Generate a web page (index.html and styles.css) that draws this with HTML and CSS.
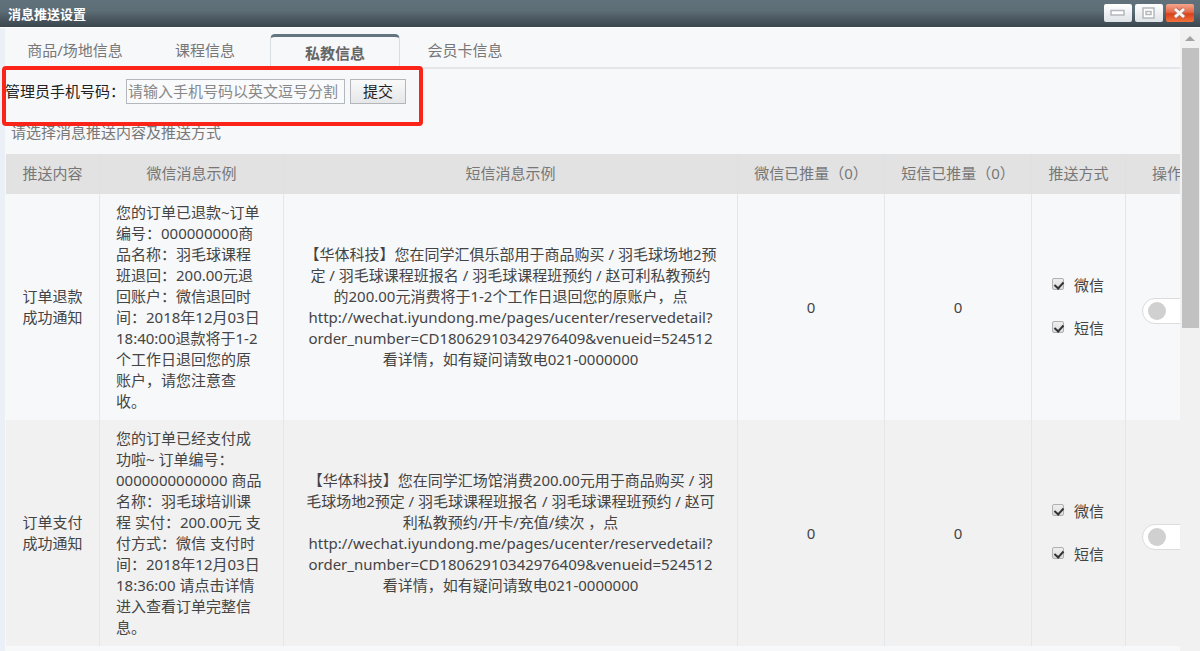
FILE: index.html
```html
<!DOCTYPE html>
<html lang="zh-CN">
<head>
<meta charset="utf-8">
<title>消息推送设置</title>
<link rel="stylesheet" href="styles.css">
</head>
<body>
<div class="window">
  <header class="titlebar">
    <h1 class="title">消息推送设置</h1>
    <div class="controls">
      <button class="ctl" type="button" aria-label="最小化">
        <svg width="28" height="18" viewBox="0 0 28 18"><rect x="7" y="6.500" width="13" height="4.500" fill="#fff" stroke="#b4b8bc" stroke-width="1.500"/></svg>
      </button>
      <button class="ctl" type="button" aria-label="最大化">
        <svg width="28" height="18" viewBox="0 0 28 18"><rect x="8" y="4" width="11" height="10" fill="#fff" stroke="#b4b8bc" stroke-width="1.500"/><rect x="11" y="7.500" width="5" height="3" fill="none" stroke="#b4b8bc" stroke-width="1.500"/></svg>
      </button>
      <button class="ctl ctl-close" type="button" aria-label="关闭">
        <svg width="28" height="18" viewBox="0 0 28 18"><path d="M9 5l9 8M18 5l-9 8" stroke="#b0705f" stroke-width="4.500"/><path d="M9 5l9 8M18 5l-9 8" stroke="#f6f3f2" stroke-width="3"/></svg>
      </button>
    </div>
  </header>
  <div class="body">
    <main class="pane">
      <nav class="tabs">
        <button class="tab" type="button">商品/场地信息</button>
        <button class="tab" type="button">课程信息</button>
        <button class="tab active" type="button">私教信息</button>
        <button class="tab" type="button">会员卡信息</button>
      </nav>
      <form class="phone-form">
        <label for="phone">管理员手机号码：</label>
        <input class="phone" id="phone" type="text" placeholder="请输入手机号码以英文逗号分割">
        <button class="submit" type="button">提交</button>
        <span class="highlight"></span>
      </form>
      <p class="hint">请选择消息推送内容及推送方式</p>
      <table class="grid">
        <colgroup><col class="c-name"><col class="c-wechat"><col class="c-sms"><col class="c-count"><col class="c-count"><col class="c-way"><col class="c-op"></colgroup>
        <thead>
          <tr><th>推送内容</th><th>微信消息示例</th><th>短信消息示例</th><th>微信已推量（0）</th><th>短信已推量（0）</th><th>推送方式</th><th class="op-head">操作</th></tr>
        </thead>
        <tbody>
          <tr>
            <td>订单退款<br>成功通知</td>
            <td class="wechat">您的订单已退款~订单<br>编号：000000000商<br>品名称：羽毛球课程<br>班退回：200.00元退<br>回账户：微信退回时<br>间：2018年12月03日<br>18:40:00退款将于1-2<br>个工作日退回您的原<br>账户，请您注意查<br>收。</td>
            <td>【华体科技】您在同学汇俱乐部用于商品购买 / 羽毛球场地2预<br>定 / 羽毛球课程班报名 / 羽毛球课程班预约 / 赵可利私教预约<br>的200.00元消费将于1-2个工作日退回您的原账户，点<br>http://wechat.iyundong.me/pages/ucenter/reservedetail?<br>order_number=CD18062910342976409&amp;venueid=524512<br>看详情，如有疑问请致电021-0000000</td>
            <td>0</td>
            <td>0</td>
            <td><div class="ways">
              <label class="way"><input class="check" type="checkbox" checked>微信</label>
              <label class="way"><input class="check" type="checkbox" checked>短信</label>
            </div></td>
            <td class="op"><input class="switch" type="checkbox" aria-label="启用订单退款成功通知"></td>
          </tr>
          <tr>
            <td>订单支付<br>成功通知</td>
            <td class="wechat">您的订单已经支付成<br>功啦~ 订单编号：<br>0000000000000 商品<br>名称：羽毛球培训课<br>程 实付：200.00元 支<br>付方式：微信 支付时<br>间：2018年12月03日<br>18:36:00 请点击详情<br>进入查看订单完整信<br>息。</td>
            <td>【华体科技】您在同学汇场馆消费200.00元用于商品购买 / 羽<br>毛球场地2预定 / 羽毛球课程班报名 / 羽毛球课程班预约 / 赵可<br>利私教预约/开卡/充值/续次 ，点<br>http://wechat.iyundong.me/pages/ucenter/reservedetail?<br>order_number=CD18062910342976409&amp;venueid=524512<br>看详情，如有疑问请致电021-0000000</td>
            <td>0</td>
            <td>0</td>
            <td><div class="ways">
              <label class="way"><input class="check" type="checkbox" checked>微信</label>
              <label class="way"><input class="check" type="checkbox" checked>短信</label>
            </div></td>
            <td class="op"><input class="switch" type="checkbox" aria-label="启用订单支付成功通知"></td>
          </tr>
        </tbody>
      </table>
    </main>
    <div class="scrollbar">
      <svg class="arrow" width="20" height="20" viewBox="0 0 20 20"><path d="M5 13L10 8L15 13Z" fill="#a3a3a3"/></svg>
      <div class="thumb"></div>
    </div>
  </div>
</div>
</body>
</html>
```
FILE: styles.css
```css
* { box-sizing: border-box; }

body {
  margin: 0;
  background: #f7f8fa;
  color: #444;
  font: 15px/21px "Noto Sans", "Noto Sans CJK SC", sans-serif;
}

button, input { font: inherit; margin: 0; }

.window {
  display: flex;
  flex-direction: column;
  height: 100vh;
  overflow: hidden;
}

.titlebar {
  display: flex;
  justify-content: space-between;
  align-items: center;
  flex: none;
  height: 27px;
  padding: 0 6px 0 8px;
  background: linear-gradient(#60717b 0, #5d6e77 40%, #505e67 60%, #3b464e 100%);
}

.title {
  margin: 0;
  color: #fff;
  font-size: 13px;
  line-height: 26px;
}

.controls { display: flex; gap: 3px; padding-bottom: 1px; }

.ctl {
  width: 28px;
  height: 18px;
  padding: 0;
  border: 0;
  border-radius: 2px;
  background: linear-gradient(#fff, #eef1f3 50%, #dde3e7);
  overflow: hidden;
}

.ctl svg { display: block; }

.ctl-close { background: linear-gradient(#f3a68c 0, #e5694a 45%, #d9411b 55%, #f0713b 100%); }

.body {
  display: flex;
  flex: 1;
  min-height: 0;
  border-top: 1px solid #fff;
}

.pane {
  flex: 1;
  min-width: 0;
  overflow: hidden;
  padding-left: 5px;
  background: linear-gradient(to right, #ebeff6 5px, transparent 5px);
}

.tabs {
  display: flex;
  align-items: flex-end;
  height: 41px;
  padding-left: 5px;
  border-bottom: 2px solid #e4e6e9;
}

.tab {
  width: 130px;
  height: 33px;
  padding: 0;
  border: 0;
  background: none;
  color: #777;
  line-height: 33px;
}

.tab.active {
  border: 1px solid #d8dde2;
  border-top: 3px solid #65757f;
  border-bottom: 0;
  border-radius: 5px 5px 0 0;
  color: #666;
  font-weight: bold;
}

.phone-form {
  position: relative;
  display: flex;
  align-items: center;
  height: 45px;
  color: #222;
}

.phone-form label { flex: none; width: 121px; white-space: nowrap; }

.phone {
  width: 219px;
  height: 25px;
  padding: 0 1px 2px;
  border: 1px solid #b4b8bc;
  border-radius: 0;
  background: #f9fafc;
}

.phone::placeholder { color: #888; opacity: 1; }

.submit {
  width: 56px;
  height: 25px;
  margin-left: 5px;
  padding: 0;
  border: 1px solid #b4b7ba;
  background: linear-gradient(#f9f9fa, #e6e7e8);
  color: #222;
}

/* callout frame laid over the form */
.highlight {
  position: absolute;
  top: -3px;
  left: -3px;
  width: 421px;
  height: 60px;
  border: 4px solid #fb2418;
  border-radius: 4px;
  pointer-events: none;
}

.hint {
  margin: 0;
  padding: 8px 6px 11px;
  color: #777;
}

.grid {
  width: 100%;
  min-width: 1240px;
  margin-left: 1px;
  border-collapse: separate;
  border-spacing: 0;
  table-layout: fixed;
}

.c-name, .c-way { width: 94px; }
.c-wechat { width: 184px; }
.c-sms { width: 454px; }
.c-count { width: 147px; }

.grid th {
  height: 40px;
  padding: 0 0 2px;
  border-right: 1px solid #dfe0e1;
  background: #e2e2e2;
  color: #777;
  font-weight: normal;
}

.grid td {
  padding: 8px 0;
  border-right: 1px solid #e4e7ea;
  text-align: center;
  white-space: nowrap;
}

.grid tbody tr:nth-child(even) { background: #f1f1f1; }

.grid .wechat { padding-left: 16px; text-align: left; }

.grid .op-head { padding-left: 26px; text-align: left; }

.grid .op { padding: 8px 0 0 16px; text-align: left; }

.ways {
  display: flex;
  flex-direction: column;
  gap: 22px;
  padding-left: 20px;
}

.way { display: flex; align-items: center; gap: 10px; }

.check {
  width: 12px;
  height: 12px;
  margin-bottom: 3px;
  border: 1px solid #b0b0b0;
  border-radius: 2px;
  appearance: none;
  background: linear-gradient(#eee, #dcdcdc);
}

.check:checked::after {
  content: "";
  display: block;
  width: 4px;
  height: 7px;
  margin: 1px 0 0 3px;
  border: solid #333;
  border-width: 0 2px 2px 0;
  transform: rotate(42deg);
}

.switch {
  display: block;
  width: 56px;
  height: 26px;
  padding: 3px 5px;
  border: 1px solid #dcdcdc;
  border-radius: 13px;
  appearance: none;
  background: #fff;
}

.switch::after {
  content: "";
  display: block;
  width: 18px;
  height: 18px;
  border-radius: 50%;
  background: #d0d0d0;
}

.scrollbar {
  flex: none;
  width: 20px;
  background: #f1f1f1;
}

.arrow { display: block; }

.thumb {
  width: 17px;
  height: 45%;
  margin-left: 2px;
  background: #c1c1c1;
}
```
